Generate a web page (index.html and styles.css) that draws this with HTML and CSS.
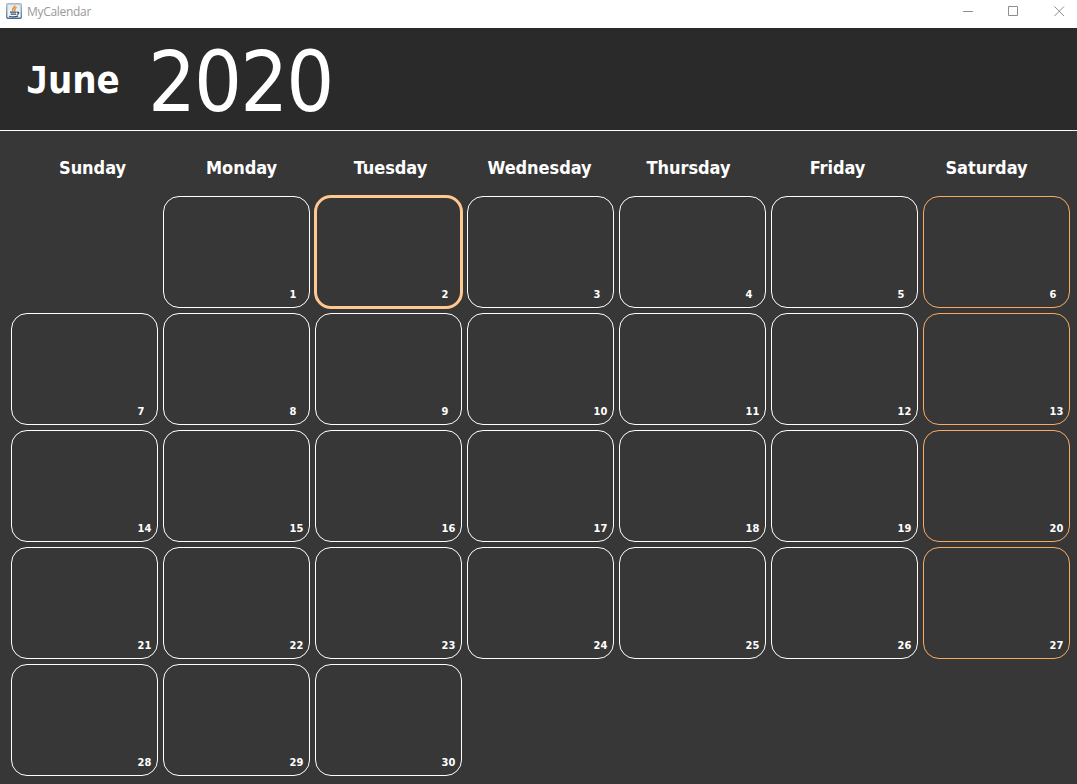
FILE: index.html
```
<!DOCTYPE html>
<html lang="en">
<head>
<meta charset="utf-8">
<title>MyCalendar</title>
<link rel="stylesheet" href="styles.css">
</head>
<body>
<div class="titlebar">
  <svg class="app-icon" width="16" height="17" viewBox="0 0 16 17">
    <defs><linearGradient id="g" x1="0" y1="0" x2="0" y2="1"><stop offset="0" stop-color="#a5b9cc"/><stop offset="1" stop-color="#466c92"/></linearGradient>
    <linearGradient id="f" x1="0" y1="0" x2="0" y2="1"><stop offset="0" stop-color="#dde5ed"/><stop offset="1" stop-color="#fff"/></linearGradient></defs>
    <rect x=".75" y=".75" width="14.5" height="14.5" rx="1" fill="url(#f)" stroke="url(#g)" stroke-width="1.3"/>
    <path d="M9 2.6C9.2 4.5 5.2 5 7 8M10.6 4.4C7.5 5.6 9.8 6.3 8.4 8" fill="none" stroke="#e9892c" stroke-width="1.4"/>
    <path d="M4 9.2H10.5M4.6 11.2H10M3 13.2C5.5 14 10 14 12.2 12.9M11 9.3C13.6 8.7 13 11.2 10.8 11.5" fill="none" stroke="#33506d" stroke-width="1.2"/>
  </svg>
  <span class="app-name">MyCalendar</span>
  <div class="controls">
    <svg width="11" height="11" viewBox="0 0 11 11"><path d="M1 5.5H11"/></svg>
    <svg width="11" height="11" viewBox="0 0 11 11"><path d="M.5 .5H9.5V9.5H.5Z"/></svg>
    <svg width="11" height="11" viewBox="0 0 11 11"><path d="M.5 .5L10 10M10 .5L.5 10"/></svg>
  </div>
</div>
<header class="heading">
  <span class="month"><span class="initial">J</span>une</span>
  <span class="year">2020</span>
</header>
<main class="calendar">
  <div class="weekdays">
    <span>Sunday</span><span>Monday</span><span>Tuesday</span><span>Wednesday</span><span>Thursday</span><span>Friday</span><span>Saturday</span>
  </div>
  <div class="days">
    <div class="day first">1</div><div class="day today">2</div><div class="day">3</div><div class="day">4</div><div class="day">5</div><div class="day sat">6</div>
    <div class="day">7</div><div class="day">8</div><div class="day">9</div><div class="day">10</div><div class="day">11</div><div class="day">12</div><div class="day sat">13</div>
    <div class="day">14</div><div class="day">15</div><div class="day">16</div><div class="day">17</div><div class="day">18</div><div class="day">19</div><div class="day sat">20</div>
    <div class="day">21</div><div class="day">22</div><div class="day">23</div><div class="day">24</div><div class="day">25</div><div class="day">26</div><div class="day sat">27</div>
    <div class="day">28</div><div class="day">29</div><div class="day">30</div>
  </div>
</main>
</body>
</html>
```
FILE: styles.css
```
* { box-sizing: border-box; }
body {
  margin: 0;
  height: 784px;
  overflow: hidden;
  background: #373737;
  color: #fff;
  font-family: "DejaVu Sans Condensed", "DejaVu Sans", sans-serif;
  font-stretch: condensed;
}
.titlebar {
  display: flex;
  align-items: flex-start;
  height: 28px;
  padding-left: 6px;
  background: #fff;
}
.app-icon { margin-top: 3px; }
.app-name {
  margin: 3px 0 0 5px;
  font: 12px/17px "Open Sans", sans-serif;
  letter-spacing: -0.3px;
  color: #999;
}
.controls {
  display: flex;
  gap: 35px;
  margin: 6px 12px 0 auto;
}
.controls svg { fill: none; stroke: #938c8c; stroke-width: 1; }
.heading {
  display: flex;
  height: 103px;
  background: #2a2a2a;
  border-bottom: 1px solid #fff;
}
.month {
  width: 121px;
  padding-left: 26px;
  font-size: 38px;
  line-height: 104px;
  font-weight: bold;
}
.initial {
  margin-right: -1px;
  font-family: "DejaVu Sans Mono", monospace;
  font-stretch: normal;
}
.year {
  margin-left: 27px;
  font-size: 84px;
  line-height: 109px;
  letter-spacing: -2px;
}
.weekdays {
  display: grid;
  grid-template-columns: repeat(7, 149px);
  height: 65px;
  padding: 24px 0 0 18px;
  font-size: 18px;
  line-height: 26px;
  font-weight: bold;
  text-align: center;
  letter-spacing: -0.05px;
}
.days {
  display: grid;
  grid-template-columns: repeat(7, 147px);
  grid-auto-rows: 112px;
  gap: 5px;
  padding-left: 11px;
}
.day {
  border: 1px solid #fff;
  border-radius: 16px;
  padding: 91px 0 0 125.5px;
  font-size: 11px;
  line-height: 14px;
  font-weight: bold;
}
.first { grid-column: 2; }
.sat { border-color: #f9aa62; }
.today {
  margin: -1px;
  border: 3px solid #ffc891;
  border-radius: 17px;
  padding: 90px 0 0 124.5px;
}
```
